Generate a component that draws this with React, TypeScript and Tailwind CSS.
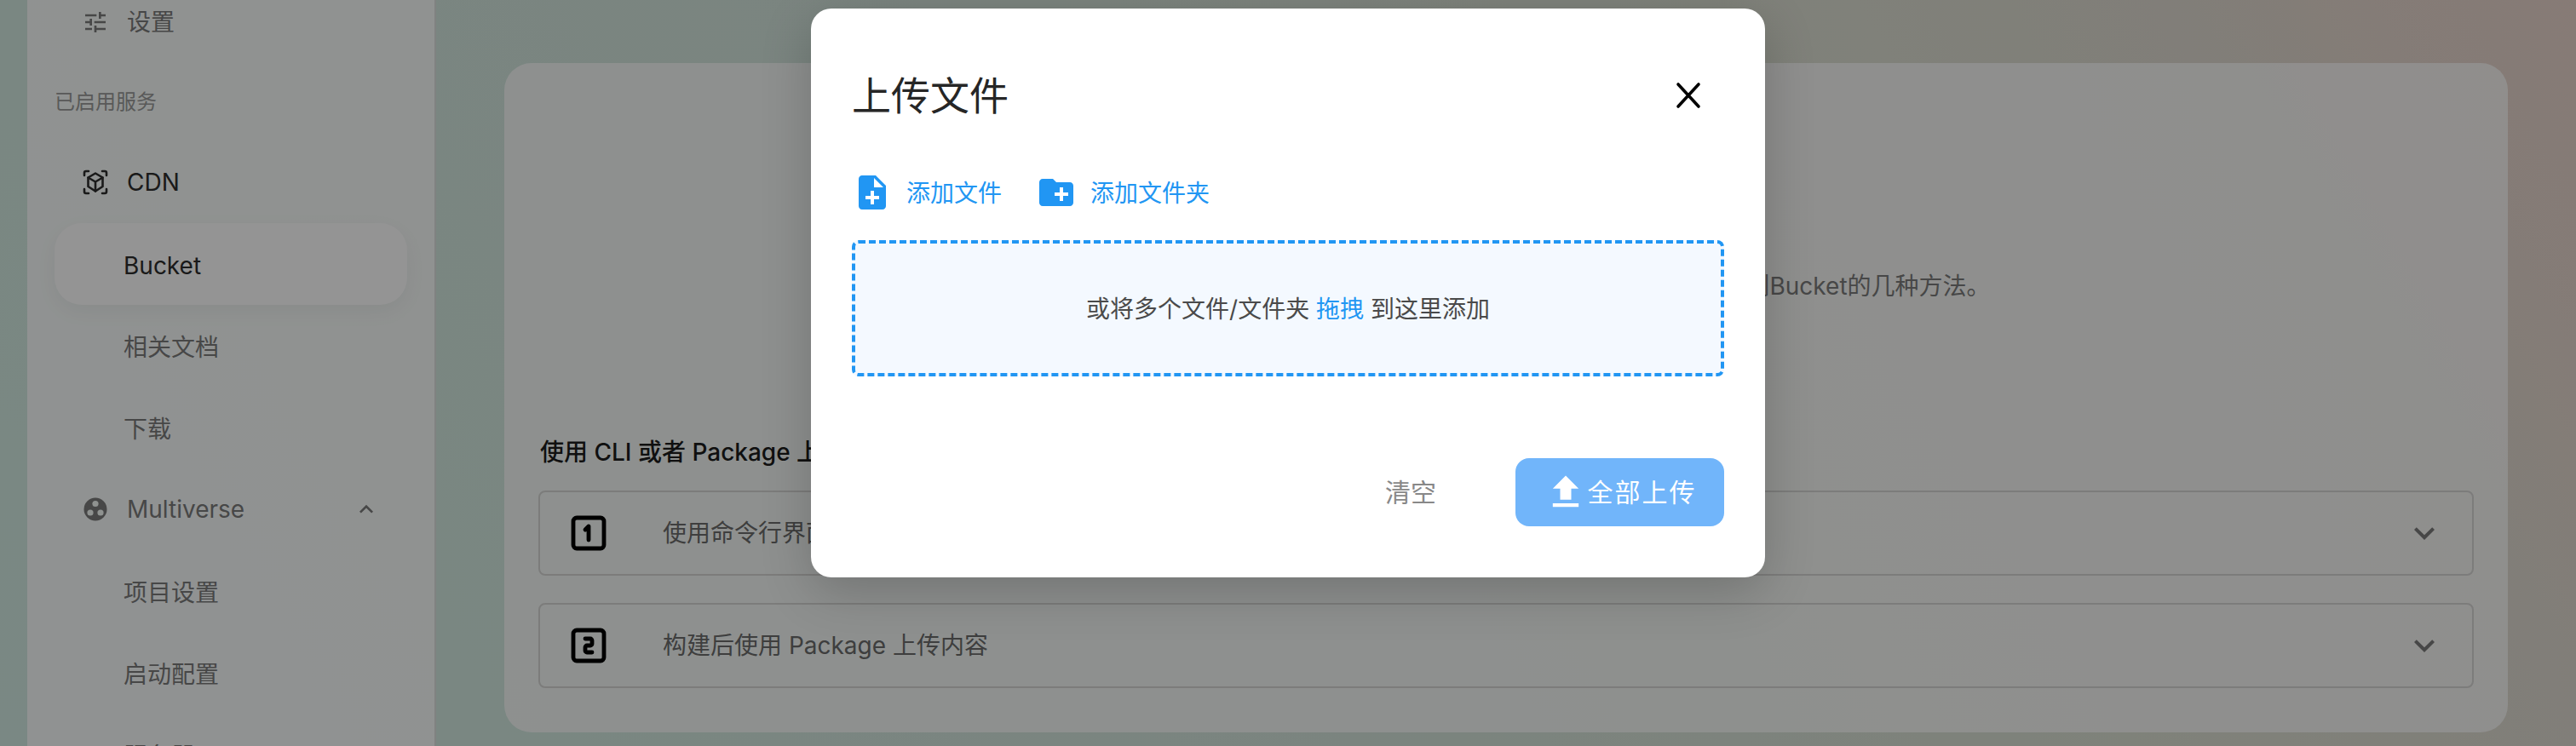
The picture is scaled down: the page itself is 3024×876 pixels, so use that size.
import { MdNoteAdd, MdCreateNewFolder, MdFileUpload, MdTune, MdExpandMore, MdExpandLess } from "react-icons/md";
import { TbSquareNumber1, TbSquareNumber2 } from "react-icons/tb";

function CdnIcon() {
  return (
    <svg width="32" height="32" viewBox="0 0 32 32" fill="none" stroke="#2d2d2d" strokeWidth="2.6" strokeLinecap="round" strokeLinejoin="round">
      <path d="M3 8V5a2 2 0 0 1 2-2h3" />
      <path d="M24 3h3a2 2 0 0 1 2 2v3" />
      <path d="M3 24v3a2 2 0 0 0 2 2h3" />
      <path d="M29 24v3a2 2 0 0 1-2 2h-3" />
      <path d="M16 5.5l8.5 5v10.5L16 26.5 7.5 21V10.5z" />
      <path d="M7.5 10.5l8.5 5 8.5-5M16 15.5v11" />
    </svg>
  );
}

function MultiverseIcon() {
  return (
    <svg width="32" height="32" viewBox="0 0 32 32">
      <circle cx="16" cy="16" r="13.5" fill="#7b7b7b" />
      <circle cx="16" cy="9.5" r="3.6" fill="#f6fbf9" />
      <circle cx="10" cy="20" r="3.6" fill="#f6fbf9" />
      <circle cx="22" cy="20" r="3.6" fill="#f6fbf9" />
    </svg>
  );
}

function SubItem({ label, active }: { label: string; active?: boolean }) {
  return (
    <div
      className={
        active
          ? "mx-8 h-24 shrink-0 flex items-center pl-[81px] pt-[3px] rounded-[32px] bg-white text-[#2d2d2d] shadow-[0_8px_24px_rgba(0,0,0,0.05)]"
          : "mx-8 h-24 shrink-0 flex items-center pl-[81px] pt-[3px] text-[#7b7b7b]"
      }
    >
      {label}
    </div>
  );
}

function Step({ icon, label }: { icon: React.ReactNode; label: string }) {
  return (
    <div className="h-[100px] rounded-lg border-2 border-[#d6d6d4] flex items-center pl-[33px] pr-8">
      <span className="text-black flex">{icon}</span>
      <span className="ml-[63px] text-[#6b6b6b]">{label}</span>
      <MdExpandMore size={48} color="#7b7b7b" className="ml-auto" />
    </div>
  );
}

export default function App() {
  return (
    <div className="relative h-[876px] w-[3024px] overflow-hidden flex text-[28px] leading-10 [font-family:Inter,'Noto_Sans_CJK_SC',sans-serif] bg-[linear-gradient(60deg,#d2ebe3_0%,#d4e4db_45%,#dbe0d3_71%,#dedad0_86%,#e4d6cd_93%,#e8d4cb_100%)]">
      <aside className="ml-8 w-[480px] shrink-0 -mt-[22px] h-[1000px] flex flex-col bg-white/85 border-r-2 border-[#dde1df]">
        <div className="h-24 shrink-0 flex items-center pl-16 text-[#7b7b7b]">
          <MdTune size={32} color="#7b7b7b" />
          <span className="ml-[21px]">设置</span>
        </div>
        <div className="h-[92px] shrink-0 flex items-center pl-8 text-2xl text-[#999999]">已启用服务</div>
        <div className="h-24 shrink-0 flex items-center pl-16 text-[#2d2d2d]">
          <CdnIcon />
          <span className="ml-[21px]">CDN</span>
        </div>
        <SubItem label="Bucket" active />
        <SubItem label="相关文档" />
        <SubItem label="下载" />
        <div className="h-24 shrink-0 flex items-center pl-16 pr-16 text-[#7b7b7b]">
          <MultiverseIcon />
          <span className="ml-[21px]">Multiverse</span>
          <MdExpandLess size={32} color="#7b7b7b" className="ml-auto" />
        </div>
        <SubItem label="项目设置" />
        <SubItem label="启动配置" />
        <SubItem label="服务器" />
      </aside>

      <main className="ml-[80px] mt-[74px] w-[2352px] h-[786px] shrink-0 rounded-[32px] bg-white/75 px-10 flex flex-col">
        <p className="mt-[242px] pl-[10px] text-center text-[#7b7b7b]">这里为您介绍了将您的静态网站、图片及其他各类文件内容快速上传到Bucket的几种方法。</p>
        <h2 className="mt-[155px] font-medium text-[#1c1c1c] px-[2px]">使用 CLI 或者 Package 上传内容</h2>
        <div className="mt-[25px] flex flex-col gap-8">
          <Step icon={<TbSquareNumber1 size={48} strokeWidth={2.4} />} label="使用命令行界面上传内容" />
          <Step icon={<TbSquareNumber2 size={48} strokeWidth={2.4} />} label="构建后使用 Package 上传内容" />
        </div>
      </main>

      <div className="absolute inset-0 bg-black/[0.42] flex justify-center items-start pt-[10px]">
        <section className="w-[1120px] rounded-3xl bg-white px-12 pt-[72px] pb-[60px] flex flex-col shadow-[0_16px_60px_rgba(0,0,0,0.2)]">
          <div className="h-[60px] flex items-center justify-between">
            <h1 className="text-[46px] leading-[60px] font-normal text-[#262626]">上传文件</h1>
            <svg width="32" height="32" viewBox="0 0 32 32" className="mr-[26px]" fill="none" stroke="#000" strokeWidth="3.6" strokeLinecap="round">
              <path d="M4 3l24 26M28 3L4 29" />
            </svg>
          </div>
          <div className="mt-[60px] h-12 flex items-center gap-10 text-[#2196f3]">
            <div className="flex items-center gap-4">
              <MdNoteAdd size={48} />
              <span className="pt-[2px]">添加文件</span>
            </div>
            <div className="flex items-center gap-4">
              <MdCreateNewFolder size={48} />
              <span className="pt-[2px]">添加文件夹</span>
            </div>
          </div>
          <div className="mt-8 h-40 rounded-lg border-4 border-dashed border-[#2196f3] bg-[#f4f9ff] flex items-center justify-center pt-[2px] text-[#4a4a4a]">
            <span>
              或将多个文件/文件夹 <span className="text-[#2196f3]">拖拽</span> 到这里添加
            </span>
          </div>
          <div className="mt-24 h-20 flex items-center justify-end">
            <span className="mr-[93px] text-[30px] text-[#888888]">清空</span>
            <div className="w-[245px] h-20 rounded-2xl bg-[#71b5fa] text-white flex items-center justify-center text-[30px] tracking-[2px]">
              <MdFileUpload size={52} />
              <span>全部上传</span>
            </div>
          </div>
        </section>
      </div>
    </div>
  );
}
